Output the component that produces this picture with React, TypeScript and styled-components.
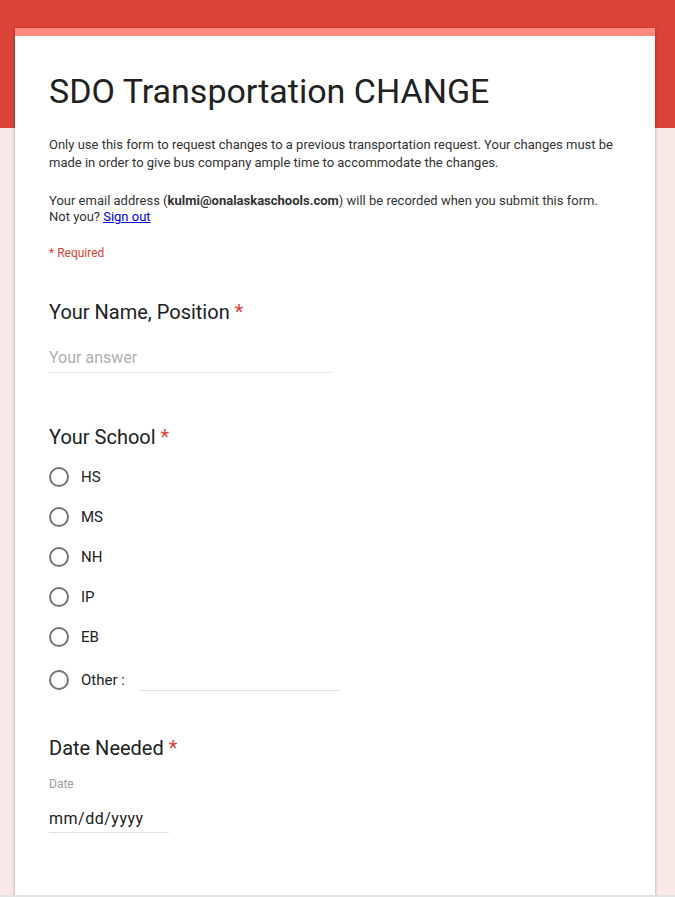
import styled, { createGlobalStyle } from "styled-components";

const GlobalStyle = createGlobalStyle`
  html, body {
    margin: 0;
    padding: 0;
    background: #fbe9e7;
    font-family: Roboto, "Noto Sans", Arial, sans-serif;
    color: #202124;
  }
`;

const SCHOOLS = ["HS", "MS", "NH", "IP", "EB"];

const Viewport = styled.div`
  height: 897px;
  overflow: hidden;
  border-bottom: 2px solid #e3e3e3;
  box-sizing: border-box;
`;

const Page = styled.div`
  background: linear-gradient(#db4437 0, #db4437 128px, #fbe9e7 128px);
  padding: 28px 20px 0 15px;
`;

const Card = styled.main`
  width: 640px;
  background: #fff;
  border-top: 8px solid #ff8a80;
  box-shadow: 0 1px 3px rgba(0, 0, 0, 0.25), 0 2px 6px rgba(0, 0, 0, 0.08);
  padding: 34px 34px 60px;
  box-sizing: border-box;
`;

const Title = styled.h1`
  margin: 0;
  font-size: 34px;
  line-height: 42px;
  font-weight: 400;
  color: #212121;
`;

const Description = styled.p`
  margin: 24px 0 0;
  font-size: 13px;
  line-height: 18px;
  color: #333;
`;

const EmailNote = styled.p`
  margin: 21px 0 0;
  font-size: 13px;
  line-height: 16px;
  color: #333;

  b {
    font-weight: 700;
  }

  a {
    color: #0000ee;
    text-decoration: underline;
  }
`;

const Required = styled.div`
  margin-top: 20px;
  font-size: 12px;
  line-height: 16px;
  color: #db4437;
`;

const Question = styled.section<{ $top: number }>`
  margin-top: ${(p) => p.$top}px;
`;

const QuestionTitle = styled.h2`
  margin: 0;
  font-size: 20px;
  line-height: 24px;
  font-weight: 400;
  color: #202124;

  span {
    color: #db4437;
  }
`;

const TextAnswer = styled.div`
  margin-top: 24px;
  width: 282px;
  border-bottom: 1px solid #e0e0e0;
  font-size: 16px;
  line-height: 20px;
  padding-bottom: 4px;
  color: #b0b0b0;
`;

const RadioList = styled.div`
  margin-top: 18px;
  display: flex;
  flex-direction: column;
  gap: 20px;
`;

const RadioRow = styled.label`
  display: flex;
  align-items: center;
  gap: 12px;
  height: 20px;
  font-size: 15px;
  color: #202124;
`;

const RadioCircle = styled.span`
  width: 20px;
  height: 20px;
  border: 2px solid #757575;
  border-radius: 50%;
  box-sizing: border-box;
  flex-shrink: 0;
`;

const OtherRow = styled(RadioRow)`
  margin-top: 3px;
`;

const OtherInput = styled.span`
  width: 200px;
  height: 20px;
  margin-left: 2px;
  border-bottom: 1px solid #e0e0e0;
`;

const DateLabel = styled.div`
  margin-top: 17px;
  font-size: 12px;
  line-height: 14px;
  color: #9e9e9e;
`;

const DateField = styled.div`
  margin-top: 18px;
  width: 120px;
  border-bottom: 1px solid #e0e0e0;
  font-size: 16px;
  line-height: 20px;
  letter-spacing: 0.5px;
  padding-bottom: 3px;
  color: #202124;
`;

export default function App() {
  return (
    <>
      <GlobalStyle />
      <Viewport>
        <Page>
          <Card>
            <Title>SDO Transportation CHANGE</Title>
            <Description>
              Only use this form to request changes to a previous transportation request. Your changes must be
              made in order to give bus company ample time to accommodate the changes.
            </Description>
            <EmailNote>
              Your email address (<b>kulmi@onalaskaschools.com</b>) will be recorded when you submit this form.
              <br />
              Not you? <a href="#">Sign out</a>
            </EmailNote>
            <Required>* Required</Required>

            <Question $top={39}>
              <QuestionTitle>
                Your Name, Position <span>*</span>
              </QuestionTitle>
              <TextAnswer>Your answer</TextAnswer>
            </Question>

            <Question $top={52}>
              <QuestionTitle>
                Your School <span>*</span>
              </QuestionTitle>
              <RadioList>
                {SCHOOLS.map((s) => (
                  <RadioRow key={s}>
                    <RadioCircle />
                    {s}
                  </RadioRow>
                ))}
                <OtherRow>
                  <RadioCircle />
                  Other :
                  <OtherInput />
                </OtherRow>
              </RadioList>
            </Question>

            <Question $top={46}>
              <QuestionTitle>
                Date Needed <span>*</span>
              </QuestionTitle>
              <DateLabel>Date</DateLabel>
              <DateField>mm/dd/yyyy</DateField>
            </Question>

            <Question $top={62}>
              <QuestionTitle>
                Time Needed <span>*</span>
              </QuestionTitle>
            </Question>
          </Card>
        </Page>
      </Viewport>
    </>
  );
}
